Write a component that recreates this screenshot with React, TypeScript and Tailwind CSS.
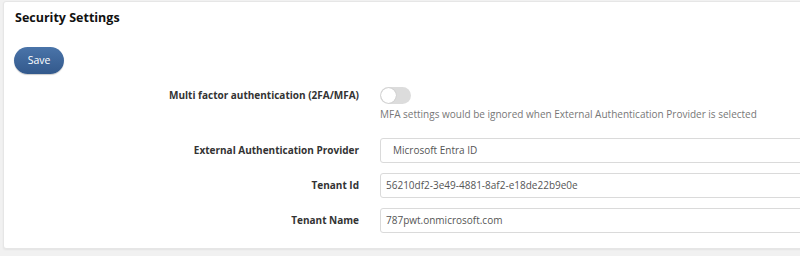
import * as React from 'react';

const fields = [
  { label: 'Tenant Id', value: '56210df2-3e49-4881-8af2-e18de22b9e0e' },
  { label: 'Tenant Name', value: '787pwt.onmicrosoft.com' },
];

export default function App() {
  return (
    <div className="w-[800px] h-[256px] overflow-hidden bg-[#f1f1f1] font-['Open_Sans',sans-serif]">
      <div className="ml-[3px] mt-px w-[820px] h-[248px] bg-white border border-[#e6e6e6] rounded-[3px] shadow-[0_1px_2px_rgba(0,0,0,0.06)]">
        <h1 className="pl-[11px] pt-[6px] text-[12.5px] font-bold text-[#111] leading-[20px]">Security Settings</h1>

        <button className="ml-[10px] mt-[19px] h-[27px] w-[50px] rounded-full bg-gradient-to-b from-[#4a74a9] to-[#33598c] text-[10.5px] text-white shadow-[0_1px_1px_rgba(0,0,0,0.2)]">
          Save
        </button>

        <div className="mt-[13px] flex">
          <div className="w-[355px] text-right text-[10px] font-bold text-[#333] leading-[17px]">
            Multi factor authentication (2FA/MFA)
          </div>
          <div className="ml-[21px] flex flex-col">
            <div className="relative h-[17px] w-[31px] rounded-full bg-[#dcdcdc]">
              <div className="absolute left-px top-px h-[15px] w-[15px] rounded-full bg-white shadow-[0_0_1px_rgba(0,0,0,0.3)]" />
            </div>
            <div className="mt-px text-[10px] text-[#777] leading-[18px]">
              MFA settings would be ignored when External Authentication Provider is selected
            </div>
          </div>
        </div>

        <div className="mt-[15px] flex items-center">
          <div className="w-[355px] text-right text-[10px] font-bold text-[#333]">External Authentication Provider</div>
          <div className="ml-[21px] h-[25px] w-[440px] flex items-center pl-[12px] border border-[#dadada] rounded-[3px] text-[10px] text-[#555]">
            Microsoft Entra ID
          </div>
        </div>

        {fields.map((f) => (
          <div key={f.label} className="mt-[10px] flex items-center">
            <div className="w-[355px] text-right text-[10px] font-bold text-[#333]">{f.label}</div>
            <div className="ml-[21px] h-[25px] w-[440px] flex items-center pl-[5px] border border-[#dadada] rounded-[3px] text-[10px] text-[#555]">
              {f.value}
            </div>
          </div>
        ))}
      </div>
    </div>
  );
}
